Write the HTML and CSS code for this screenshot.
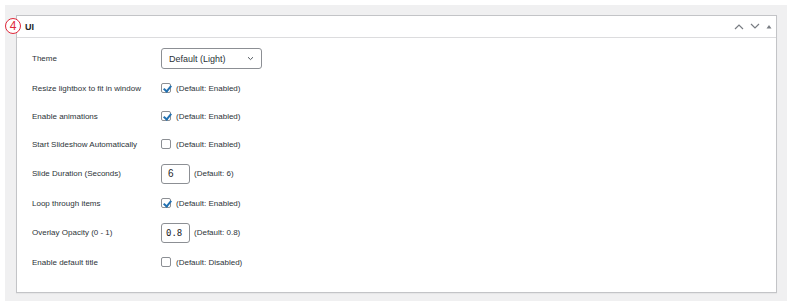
FILE: index.html
```html
<!DOCTYPE html>
<html lang="en">
<head>
    <meta charset="UTF-8">
    <meta name="viewport" content="width=device-width, initial-scale=1.0">
    <title>UI settings</title>
    <link rel="stylesheet" href="styles.css">
</head>
<body>
    <div class="wrap">
        <div class="postbox">
            <div class="postbox-header">
                <span class="step">4</span>
                <h2>UI</h2>
                <div class="handle-actions">
                    <svg width="10" height="7" viewBox="0 0 10 7"><path d="M1 6 L5 2 L9 6" fill="none" stroke="#787c82" stroke-width="1.2"/></svg>
                    <svg width="10" height="7" viewBox="0 0 10 7"><path d="M1 1 L5 5 L9 1" fill="none" stroke="#787c82" stroke-width="1.2"/></svg>
                    <svg width="6" height="5" viewBox="0 0 6 5"><path d="M0.5 4.5 L3 1 L5.5 4.5 Z" fill="#787c82"/></svg>
                </div>
            </div>
            <div class="inside">
                <div class="row tall">
                    <div class="label">Theme</div>
                    <div class="field">
                        <div class="select">Default (Light)
                            <svg width="7" height="5" viewBox="0 0 7 5"><path d="M1 1.2 L3.5 3.6 L6 1.2" fill="none" stroke="#50575e" stroke-width="1"/></svg>
                        </div>
                    </div>
                </div>
                <div class="row">
                    <div class="label">Resize lightbox to fit in window</div>
                    <div class="field"><span class="checkbox checked"></span><span class="hint">(Default: Enabled)</span></div>
                </div>
                <div class="row">
                    <div class="label">Enable animations</div>
                    <div class="field"><span class="checkbox checked"></span><span class="hint">(Default: Enabled)</span></div>
                </div>
                <div class="row">
                    <div class="label">Start Slideshow Automatically</div>
                    <div class="field"><span class="checkbox"></span><span class="hint">(Default: Enabled)</span></div>
                </div>
                <div class="row tall">
                    <div class="label">Slide Duration (Seconds)</div>
                    <div class="field"><span class="number">6</span><span class="hint">(Default: 6)</span></div>
                </div>
                <div class="row">
                    <div class="label">Loop through items</div>
                    <div class="field"><span class="checkbox checked"></span><span class="hint">(Default: Enabled)</span></div>
                </div>
                <div class="row tall">
                    <div class="label">Overlay Opacity (0 - 1)</div>
                    <div class="field"><span class="number mono">0.8</span><span class="hint">(Default: 0.8)</span></div>
                </div>
                <div class="row">
                    <div class="label">Enable default title</div>
                    <div class="field"><span class="checkbox"></span><span class="hint">(Default: Disabled)</span></div>
                </div>
            </div>
        </div>
    </div>
</body>
</html>
```

FILE: styles.css
```css
body {
    margin: 0;
    padding: 5px 6px 0 5px;
    font-family: "Liberation Sans", Arial, sans-serif;
    color: #2c3338;
    background: #fff;
}

.wrap {
    background: #f0f0f1;
    padding: 10px 10px 0 11px;
    height: 296px;
    box-sizing: border-box;
}

.postbox {
    background: #fff;
    border: 1px solid #c3c4c7;
    box-shadow: 0 1px 1px rgba(0, 0, 0, 0.04);
    height: 278px;
    box-sizing: border-box;
}

.postbox-header {
    display: flex;
    align-items: center;
    height: 21px;
    border-bottom: 1px solid #dcdcde;
    position: relative;
}

.step {
    position: absolute;
    left: -12px;
    top: 2px;
    width: 14px;
    height: 14px;
    border: 1px solid #e0283a;
    border-radius: 50%;
    color: #e0283a;
    font-size: 12px;
    line-height: 14px;
    text-align: center;
    background: #fff;
}

h2 {
    margin: 0 0 0 8px;
    font-size: 9px;
    font-weight: bold;
    color: #1d2327;
    flex: 1;
}

.handle-actions {
    display: flex;
    align-items: center;
    gap: 6px;
    margin-right: 4px;
}

.handle-actions svg {
    display: block;
}

.inside {
    padding: 5px 0 0 15px;
}

.row {
    display: flex;
    align-items: center;
    height: 28px;
    font-size: 8px;
}

.row.tall {
    height: 31px;
}

.label {
    width: 129px;
}

.field {
    display: flex;
    align-items: center;
}

.select {
    width: 101px;
    height: 21px;
    box-sizing: border-box;
    border: 1px solid #8c8f94;
    border-radius: 3px;
    display: flex;
    align-items: center;
    justify-content: space-between;
    padding: 0 7px;
    font-size: 9px;
}

.checkbox {
    width: 10px;
    height: 10px;
    box-sizing: border-box;
    border: 1px solid #8c8f94;
    border-radius: 2px;
    position: relative;
}

.checkbox.checked::after {
    content: "";
    position: absolute;
    left: 2.5px;
    top: -0.5px;
    width: 3px;
    height: 6px;
    border: solid #2271b1;
    border-width: 0 2px 2px 0;
    transform: rotate(40deg);
}

.hint {
    margin-left: 5px;
}

.number {
    width: 29px;
    height: 20px;
    box-sizing: border-box;
    border: 1px solid #8c8f94;
    border-radius: 3px;
    display: flex;
    align-items: center;
    padding-left: 6px;
    font-size: 10px;
    color: #1d2327;
    margin-right: -1px;
}

.number.mono {
    font-family: "DejaVu Sans Mono", monospace;
    font-size: 9px;
    padding-left: 4px;
}
```
